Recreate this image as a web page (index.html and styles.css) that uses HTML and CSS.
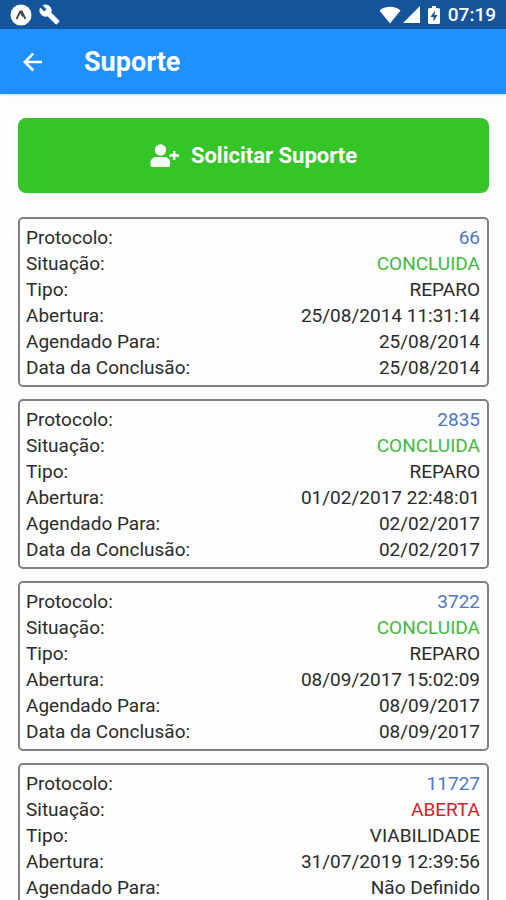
FILE: index.html
```html
<!DOCTYPE html>
<html lang="pt-BR">
  <head>
    <meta charset="utf-8" />
    <meta name="viewport" content="width=device-width, initial-scale=1" />
    <title>Suporte</title>
    <link rel="stylesheet" href="styles.css">
  </head>
  <body>
    <div class="status-bar">
      <div class="status-icons">
        <svg width="22" height="22" viewBox="0 0 22 22">
          <circle cx="11" cy="11" r="10.5" fill="#fff" />
          <path d="M6.500 15 10.200 7.500h1.600L15.500 15M11 8.500l2 4" fill="none" stroke="#3c4a55" stroke-width="1.800" />
        </svg>
        <svg width="21" height="21" viewBox="0 0 24 24">
          <path fill="#fff" stroke="#fff" d="M22.700 19l-9.100-9.100c.9-2.300.4-5-1.500-6.900-2-2-5-2.400-7.400-1.300L9 6 6 9 1.600 4.700C.4 7.100.9 10.100 2.900 12.100c1.900 1.900 4.600 2.400 6.900 1.500l9.100 9.100c.4.4 1 .4 1.400 0l2.300-2.300c.5-.4.5-1.100.1-1.400z" />
        </svg>
      </div>
      <div class="status-info">
        <svg width="22" height="18" viewBox="0 0 22 18">
          <path fill="#fff" d="M11 17.500.5 4.500C3.500 2 7 .8 11 .8s7.500 1.200 10.500 3.700z" />
        </svg>
        <svg width="17" height="17" viewBox="0 0 17 17">
          <path fill="#fff" d="M0 17 17 0v17z" />
        </svg>
        <svg class="battery" width="12" height="18" viewBox="0 0 12 18">
          <path fill="#fff" d="M4 0h4v2h2.500A1.500 1.500 0 0 1 12 3.500v13a1.500 1.500 0 0 1-1.500 1.500h-9A1.500 1.500 0 0 1 0 16.500v-13A1.500 1.500 0 0 1 1.500 2H4z" />
          <path fill="#14549a" d="M7 4.500 2.500 11h3v4.500L9.500 9h-3z" />
        </svg>
        <span>07:19</span>
      </div>
    </div>

    <header class="app-bar">
      <button class="back-button" aria-label="Voltar">
        <svg width="20" height="20" viewBox="0 0 20 20">
          <path d="M19 10H2M10.300 1.500 1.800 10l8.500 8.500" fill="none" stroke="#fff" stroke-width="2.500" />
        </svg>
      </button>
      <h1>Suporte</h1>
    </header>

    <main class="content">
      <button class="request-button">
        <svg width="29" height="24" viewBox="0 0 29 24">
          <circle cx="10.500" cy="6" r="5.700" fill="#fff" />
          <path fill="#fff" d="M6.500 13h8c3.500 0 5.500 2.500 5.500 6v2.500c0 1-.7 1.500-1.700 1.500H2.200C1.200 23 .5 22.500.5 21.500V19c0-3.500 2.500-6 6-6z" />
          <path d="M19.500 11.500H29M24.200 7v9" fill="none" stroke="#fff" stroke-width="2.500" />
        </svg>
        <span>Solicitar Suporte</span>
      </button>

      <dl class="ticket">
        <div class="row"><dt>Protocolo:</dt><dd class="protocol">66</dd></div>
        <div class="row"><dt>Situação:</dt><dd class="done">CONCLUIDA</dd></div>
        <div class="row"><dt>Tipo:</dt><dd>REPARO</dd></div>
        <div class="row"><dt>Abertura:</dt><dd>25/08/2014 11:31:14</dd></div>
        <div class="row"><dt>Agendado Para:</dt><dd>25/08/2014</dd></div>
        <div class="row"><dt>Data da Conclusão:</dt><dd>25/08/2014</dd></div>
      </dl>

      <dl class="ticket">
        <div class="row"><dt>Protocolo:</dt><dd class="protocol">2835</dd></div>
        <div class="row"><dt>Situação:</dt><dd class="done">CONCLUIDA</dd></div>
        <div class="row"><dt>Tipo:</dt><dd>REPARO</dd></div>
        <div class="row"><dt>Abertura:</dt><dd>01/02/2017 22:48:01</dd></div>
        <div class="row"><dt>Agendado Para:</dt><dd>02/02/2017</dd></div>
        <div class="row"><dt>Data da Conclusão:</dt><dd>02/02/2017</dd></div>
      </dl>

      <dl class="ticket">
        <div class="row"><dt>Protocolo:</dt><dd class="protocol">3722</dd></div>
        <div class="row"><dt>Situação:</dt><dd class="done">CONCLUIDA</dd></div>
        <div class="row"><dt>Tipo:</dt><dd>REPARO</dd></div>
        <div class="row"><dt>Abertura:</dt><dd>08/09/2017 15:02:09</dd></div>
        <div class="row"><dt>Agendado Para:</dt><dd>08/09/2017</dd></div>
        <div class="row"><dt>Data da Conclusão:</dt><dd>08/09/2017</dd></div>
      </dl>

      <dl class="ticket">
        <div class="row"><dt>Protocolo:</dt><dd class="protocol">11727</dd></div>
        <div class="row"><dt>Situação:</dt><dd class="open">ABERTA</dd></div>
        <div class="row"><dt>Tipo:</dt><dd>VIABILIDADE</dd></div>
        <div class="row"><dt>Abertura:</dt><dd>31/07/2019 12:39:56</dd></div>
        <div class="row"><dt>Agendado Para:</dt><dd>Não Definido</dd></div>
      </dl>
    </main>
  </body>
</html>
```
FILE: styles.css
```css
* {
  box-sizing: border-box;
}

body {
  margin: 0;
  background-color: #fdfdfd;
  color: #2b2b2b;
  font-family: Roboto, "Liberation Sans", sans-serif;
}

button {
  border: none;
  color: #fff;
  font-family: inherit;
  cursor: pointer;
}

.status-bar {
  display: flex;
  justify-content: space-between;
  align-items: center;
  height: 29px;
  padding: 0 10px;
  background-color: #14549a;
  color: #fff;
  font-size: 19px;
  font-weight: 500;
}

.status-icons,
.status-info {
  display: flex;
  align-items: center;
}

.status-icons {
  gap: 7px;
}

.status-info {
  gap: 2px;
}

.battery {
  margin: 0 6px;
}

.app-bar {
  display: flex;
  align-items: center;
  gap: 32px;
  height: 65px;
  padding: 0 14px;
  background-color: #1e90ff;
  box-shadow: 0 1px 2px rgba(0, 0, 0, 0.2);
}

.app-bar h1 {
  margin: 0;
  color: #fff;
  font-size: 27px;
  font-weight: bold;
}

.back-button {
  display: flex;
  padding: 9px;
  background: none;
}

.content {
  display: flex;
  flex-direction: column;
  gap: 12px;
  padding: 24px 17px 0 18px;
}

.request-button {
  display: flex;
  justify-content: center;
  align-items: center;
  gap: 12px;
  height: 75px;
  margin-bottom: 12px;
  border-radius: 8px;
  background-color: #36c528;
  font-size: 22px;
  font-weight: bold;
}

.ticket {
  margin: 0;
  padding: 6px 7px 4px 6px;
  border: 2px solid #808080;
  border-radius: 5px;
  font-size: 19px;
  line-height: 26px;
}

.row {
  display: flex;
  justify-content: space-between;
}

.row dd {
  margin: 0;
}

.row .protocol {
  color: #5277bd;
}

.row .done {
  color: #45b83f;
}

.row .open {
  color: #d2232f;
}
```
